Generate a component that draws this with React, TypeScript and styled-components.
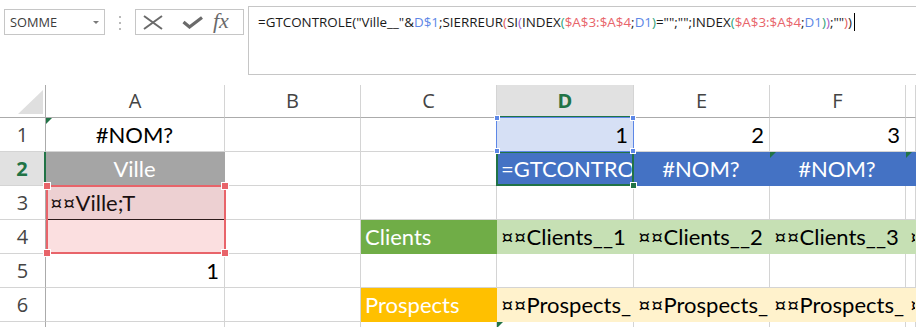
import React from 'react';
import styled, { createGlobalStyle } from 'styled-components';

const UI_FONT = "'Open Sans', 'Liberation Sans', sans-serif";
const CELL_FONT = "'Lato', 'Liberation Sans', sans-serif";
const GRID_LINE = '#d4d4d4';
const HEAD_LINE = '#ababab';
const EXCEL_GREEN = '#217346';
const REF_BLUE = '#5d87e6';
const REF_RED = '#e8646a';
const BLUE_FILL = '#4472c4';

const COLUMNS = '46px 179px 136px 136px 137px 136px 136px 1fr';
const ROWS = '33px repeat(6, 34px) 1fr';

const GlobalStyle = createGlobalStyle`
  html, body {
    margin: 0;
    padding: 0;
    background: #fff;
  }
  #root {
    width: 916px;
    height: 327px;
    overflow: hidden;
  }
`;

const Page = styled.div`
  width: 916px;
  height: 327px;
  display: flex;
  flex-direction: column;
  overflow: hidden;
  background: #fff;
`;

// ---- formula bar ----

const FormulaBar = styled.div`
  height: 85px;
  flex-shrink: 0;
  display: flex;
  align-items: flex-start;
`;

const NameBox = styled.div`
  margin: 9px 0 0 4px;
  width: 101px;
  height: 26px;
  box-sizing: border-box;
  border: 1px solid #c6c6c6;
  display: flex;
  align-items: center;
  justify-content: space-between;
  padding: 0 5px 0 5px;
  font: 12.8px ${UI_FONT};
  color: #3c3c3c;
`;

const DropArrow = styled.span`
  width: 0;
  height: 0;
  margin-top: 1px;
  border-left: 3px solid transparent;
  border-right: 3px solid transparent;
  border-top: 3px solid #7a7a7a;
`;

const Grip = styled.div`
  margin: 16px 0 0 14px;
  display: flex;
  flex-direction: column;
  gap: 4px;

  i {
    display: block;
    width: 2px;
    height: 2px;
    background: #b9b9b9;
  }
`;

const ButtonBox = styled.div`
  margin: 9px 0 0 14px;
  width: 109px;
  height: 26px;
  box-sizing: border-box;
  border: 1px solid #c6c6c6;
  display: flex;
  align-items: center;
  padding-left: 7px;
`;

const IconSlot = styled.span<{ $w: number }>`
  width: ${(p) => p.$w}px;
  display: flex;
  align-items: center;
`;

const Fx = styled.span`
  font: italic 22px 'Liberation Serif', serif;
  color: #6a6a6a;
  line-height: 1;
  margin-top: -2px;
`;

const FormulaBox = styled.div`
  margin: 6px 0 0 4px;
  flex: 1;
  height: 69px;
  box-sizing: border-box;
  border: 1px solid #c6c6c6;
  border-right: none;
  padding: 6px 0 0 9px;
  font: 13.4px ${UI_FONT};
  line-height: 18px;
  color: #1a1a1a;
  white-space: nowrap;
`;

const Tok = styled.span<{ $c?: string }>`
  color: ${(p) => p.$c || '#1a1a1a'};
`;

const Caret = styled.span`
  display: inline-block;
  width: 1px;
  height: 18px;
  margin-left: 2px;
  background: #000;
  vertical-align: top;
`;

// ---- sheet ----

const SheetArea = styled.div`
  position: relative;
  flex: 1;
`;

const Grid = styled.div`
  display: grid;
  grid-template-columns: ${COLUMNS};
  grid-template-rows: ${ROWS};
  height: 100%;
`;

const OverlayLayer = styled(Grid)`
  position: absolute;
  inset: 0;
  pointer-events: none;
`;

const CornerCell = styled.div`
  position: relative;
  border-right: 1px solid ${HEAD_LINE};
  border-bottom: 1px solid ${HEAD_LINE};

  &::after {
    content: '';
    position: absolute;
    right: 2px;
    bottom: 3px;
    border-left: 25px solid transparent;
    border-bottom: 24px solid #dfdfdf;
  }
`;

const ColHeader = styled.div<{ $active?: boolean }>`
  overflow: hidden;
  text-align: center;
  font: ${(p) => (p.$active ? 700 : 400)} 20px ${UI_FONT};
  line-height: ${(p) => (p.$active ? 31 : 32)}px;
  color: ${(p) => (p.$active ? EXCEL_GREEN : '#444')};
  background: ${(p) => (p.$active ? '#e1e1e1' : '#fff')};
  border-right: 1px solid ${GRID_LINE};
  border-bottom: ${(p) => (p.$active ? `2px solid ${EXCEL_GREEN}` : `1px solid ${HEAD_LINE}`)};
`;

const RowHeader = styled.div<{ $active?: boolean }>`
  overflow: hidden;
  text-align: center;
  font: ${(p) => (p.$active ? 700 : 400)} 20px ${UI_FONT};
  line-height: 33px;
  color: ${(p) => (p.$active ? EXCEL_GREEN : '#444')};
  background: ${(p) => (p.$active ? '#e1e1e1' : '#fff')};
  border-right: ${(p) => (p.$active ? `2px solid ${EXCEL_GREEN}` : `1px solid ${HEAD_LINE}`)};
  border-bottom: 1px solid ${GRID_LINE};
`;

type Align = 'left' | 'center' | 'right';

const Cell = styled.div<{ $align?: Align; $bg?: string; $fg?: string; $flag?: boolean; $rule?: string }>`
  position: relative;
  overflow: hidden;
  white-space: nowrap;
  padding: 0 5px 0 4px;
  text-align: ${(p) => p.$align || 'left'};
  font: 22px ${CELL_FONT};
  line-height: 33px;
  color: ${(p) => p.$fg || '#000'};
  background: ${(p) => p.$bg || '#fff'};
  border-right: 1px solid ${(p) => p.$bg || GRID_LINE};
  border-bottom: 1px solid ${(p) => p.$rule || p.$bg || GRID_LINE};

  &::before {
    content: '';
    display: ${(p) => (p.$flag ? 'block' : 'none')};
    position: absolute;
    top: 0;
    left: 0;
    border-top: 6px solid ${EXCEL_GREEN};
    border-right: 6px solid transparent;
  }
`;

// overlays drawn on top of the grid (reference ranges, active cell)
const RangeBox = styled.div<{ $row: string; $col: string; $color: string; $w: number; $m: string }>`
  position: relative;
  grid-row: ${(p) => p.$row};
  grid-column: ${(p) => p.$col};
  margin: ${(p) => p.$m};
  border: ${(p) => p.$w}px solid ${(p) => p.$color};
`;

type Corner = 'tl' | 'tr' | 'bl' | 'br';

const Handle = styled.span<{ $at: Corner; $size: number; $off: number; $color: string }>`
  position: absolute;
  box-sizing: border-box;
  width: ${(p) => p.$size}px;
  height: ${(p) => p.$size}px;
  background: ${(p) => p.$color};
  border: 1px solid #fff;
  ${(p) => (p.$at[0] === 't' ? 'top' : 'bottom')}: ${(p) => p.$off}px;
  ${(p) => (p.$at[1] === 'l' ? 'left' : 'right')}: ${(p) => p.$off}px;
`;

type CellSpec = { text?: string; align?: Align; bg?: string; fg?: string; flag?: boolean; rule?: string };

const COLS = ['A', 'B', 'C', 'D', 'E', 'F', ''];

const sheet: CellSpec[][] = [
  [
    { text: '#NOM?', align: 'center', flag: true },
    {},
    {},
    { text: '1', align: 'right', bg: '#d6e0f5' },
    { text: '2', align: 'right' },
    { text: '3', align: 'right' },
    {},
  ],
  [
    { text: 'Ville', align: 'center', bg: '#a5a5a5', fg: '#fff' },
    {},
    {},
    { text: '=GTCONTRO', bg: BLUE_FILL, fg: '#fff' },
    { text: '#NOM?', align: 'center', bg: BLUE_FILL, fg: '#fff' },
    { text: '#NOM?', align: 'center', bg: BLUE_FILL, fg: '#fff', flag: true },
    { bg: BLUE_FILL, flag: true },
  ],
  [{ text: '¤¤Ville;T', bg: '#edd0d2', fg: '#1a1010', rule: '#2d1b1b' }, {}, {}, {}, {}, {}, {}],
  [
    { bg: '#fbdfe0' },
    {},
    { text: 'Clients', bg: '#70ad47', fg: '#fff' },
    { text: '¤¤Clients__1', bg: '#c6e0b4' },
    { text: '¤¤Clients__2', bg: '#c6e0b4' },
    { text: '¤¤Clients__3', bg: '#c6e0b4' },
    { text: '¤¤Clients__4', bg: '#c6e0b4' },
  ],
  [{ text: '1', align: 'right' }, {}, {}, {}, {}, {}, {}],
  [
    {},
    {},
    { text: 'Prospects', bg: '#ffc000', fg: '#fff' },
    { text: '¤¤Prospects_', bg: '#fff2cc' },
    { text: '¤¤Prospects_', bg: '#fff2cc' },
    { text: '¤¤Prospects_', bg: '#fff2cc' },
    { text: '¤¤Prospects_', bg: '#fff2cc' },
  ],
  [{}, {}, {}, { flag: true }, {}, {}, {}],
];

const P_RED = '#e05c5c';
const P_PURPLE = '#a25dc8';
const P_GREEN = '#2fa27a';

const formula: [string, string?][] = [
  ['=GTCONTROLE("Ville__"&'],
  ['D$1', REF_BLUE],
  [';SIERREUR'],
  ['(', P_RED],
  ['SI'],
  ['(', P_PURPLE],
  ['INDEX'],
  ['(', P_GREEN],
  ['$A$3:$A$4', REF_RED],
  [';'],
  ['D1', REF_BLUE],
  [')', P_GREEN],
  ['="";"";INDEX'],
  ['(', P_GREEN],
  ['$A$3:$A$4', REF_RED],
  [';'],
  ['D1', REF_BLUE],
  [')', P_GREEN],
  [')', P_PURPLE],
  [';""'],
  [')', P_RED],
  [')'],
];

const corners: Corner[] = ['tl', 'tr', 'bl', 'br'];

const App: React.FC = () => {
  return (
    <>
      <GlobalStyle />
      <Page>
        <FormulaBar>
          <NameBox>
            <span>SOMME</span>
            <DropArrow />
          </NameBox>
          <Grip>
            <i />
            <i />
            <i />
          </Grip>
          <ButtonBox>
            <IconSlot $w={39}>
              <svg width="20" height="15" viewBox="0 0 20 15">
                <path d="M1 1 L19 14 M19 1 L1 14" stroke="#6a6a6a" strokeWidth="2" fill="none" />
              </svg>
            </IconSlot>
            <IconSlot $w={31}>
              <svg width="21" height="13" viewBox="0 0 21 13">
                <path d="M1.5 6 L7.5 11 L20 1.5" stroke="#6a6a6a" strokeWidth="3.2" fill="none" />
              </svg>
            </IconSlot>
            <IconSlot $w={24}>
              <Fx>fx</Fx>
            </IconSlot>
          </ButtonBox>
          <FormulaBox>
            {formula.map(([t, c], i) => (
              <Tok key={i} $c={c}>
                {t}
              </Tok>
            ))}
            <Caret />
          </FormulaBox>
        </FormulaBar>

        <SheetArea>
          <Grid>
            <CornerCell />
            {COLS.map((c, i) => (
              <ColHeader key={i} $active={c === 'D'}>
                {c}
              </ColHeader>
            ))}
            {sheet.map((row, r) => (
              <React.Fragment key={r}>
                <RowHeader $active={r === 1}>{r + 1}</RowHeader>
                {row.map((cell, c) => (
                  <Cell
                    key={c}
                    $align={cell.align}
                    $bg={cell.bg}
                    $fg={cell.fg}
                    $flag={cell.flag}
                    $rule={cell.rule}
                  >
                    {cell.text}
                  </Cell>
                ))}
              </React.Fragment>
            ))}
          </Grid>

          <OverlayLayer>
            {/* active cell D2 */}
            <RangeBox $row="3" $col="5" $color={EXCEL_GREEN} $w={2} $m="-1px 0 0 -1px">
              <Handle $at="br" $size={7} $off={-5} $color={EXCEL_GREEN} />
            </RangeBox>
            {/* D1 reference */}
            <RangeBox $row="2" $col="5" $color={REF_BLUE} $w={1} $m="-1px 0 0 -1px">
              {corners.map((k) => (
                <Handle key={k} $at={k} $size={6} $off={-3} $color={REF_BLUE} />
              ))}
            </RangeBox>
            {/* $A$3:$A$4 reference */}
            <RangeBox $row="4 / 6" $col="2" $color={REF_RED} $w={2} $m="-1px -1px 0 0">
              {corners.map((k) => (
                <Handle key={k} $at={k} $size={8} $off={-5} $color={REF_RED} />
              ))}
            </RangeBox>
          </OverlayLayer>
        </SheetArea>
      </Page>
    </>
  );
};

export default App;
